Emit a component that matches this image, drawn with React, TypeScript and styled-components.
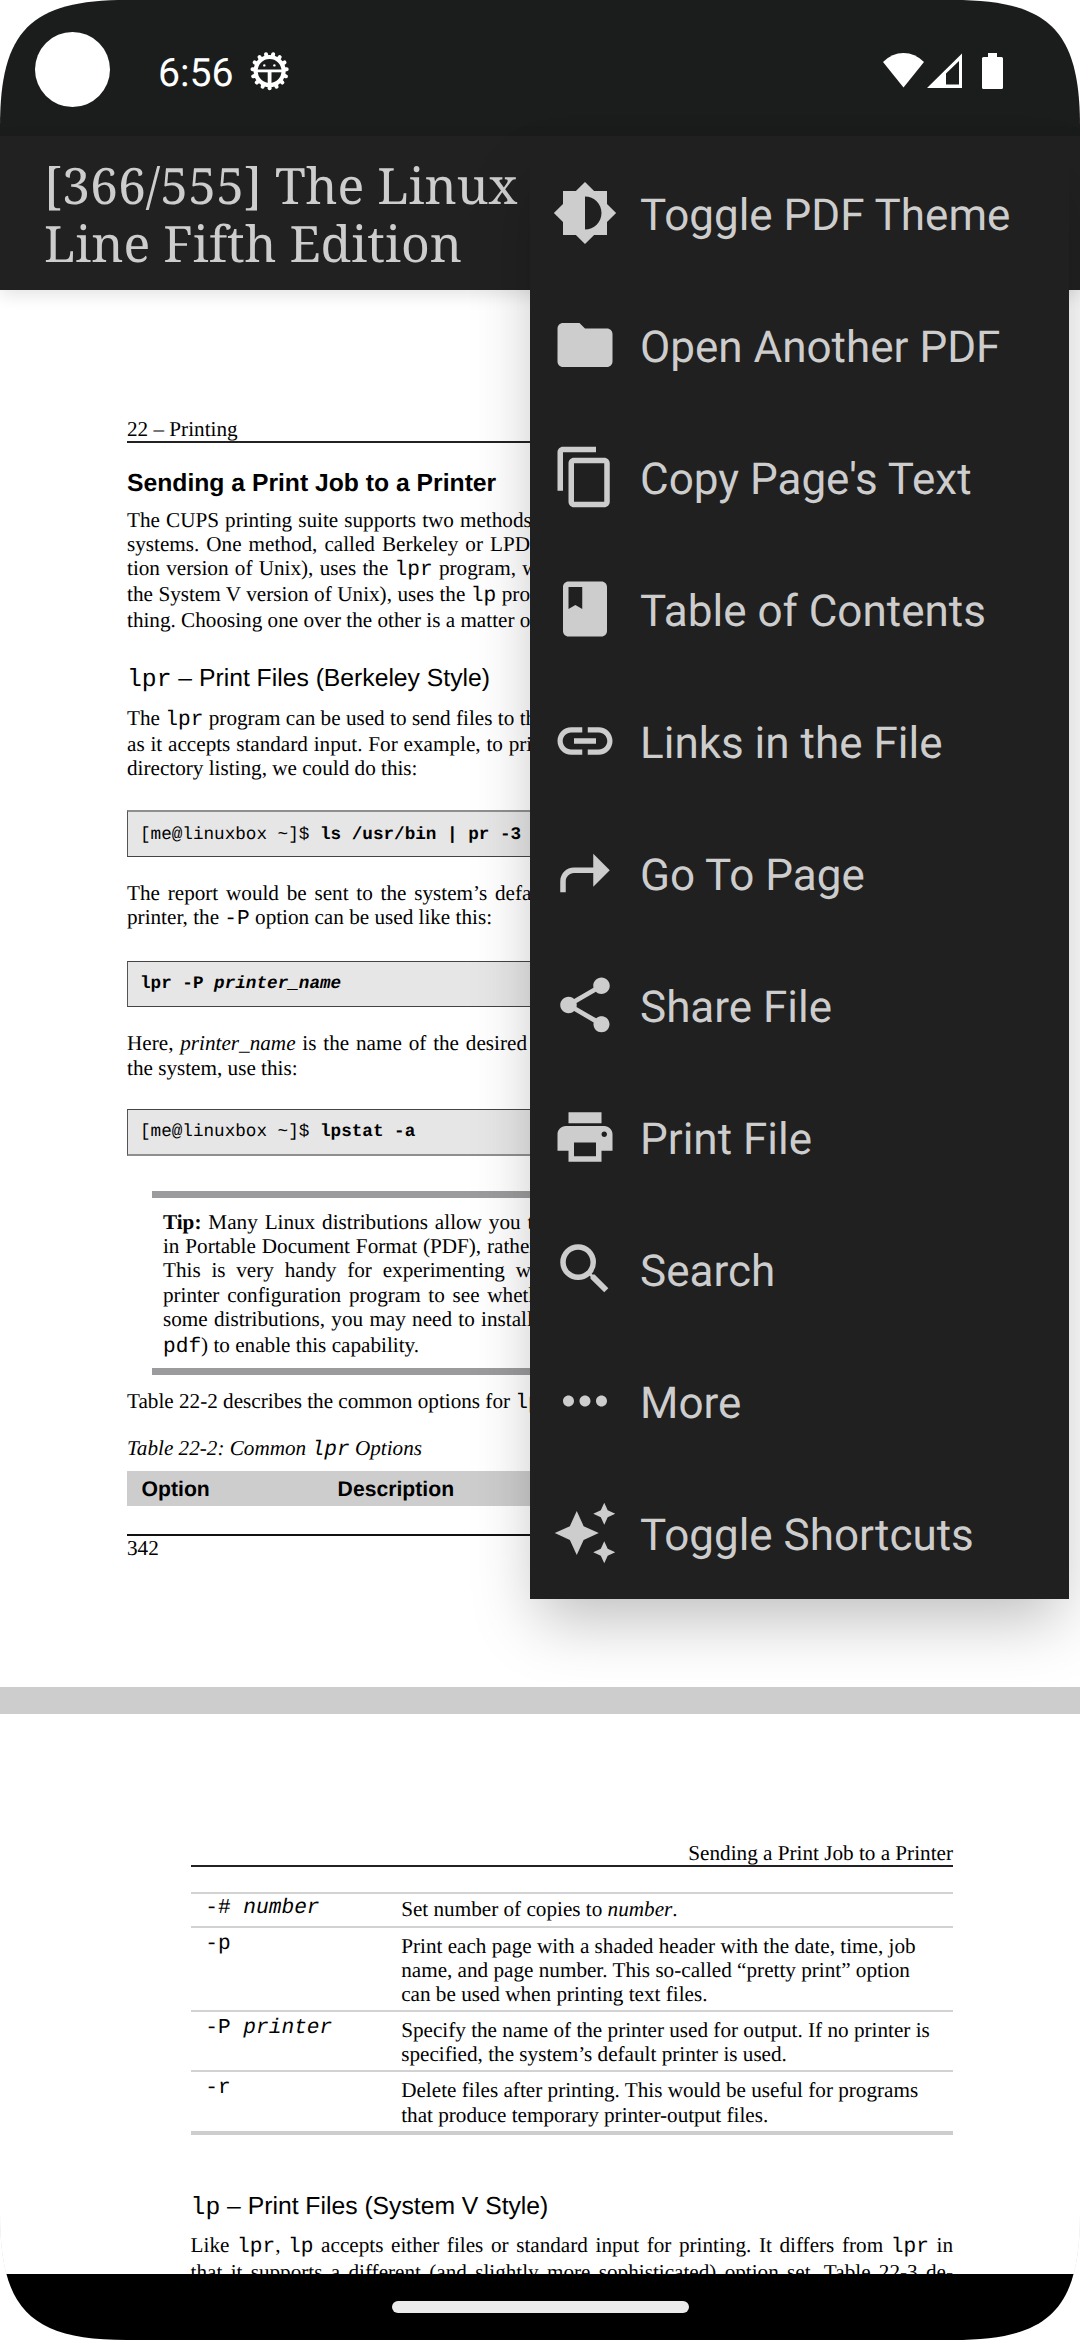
import React from "react";
import styled, { createGlobalStyle, css } from "styled-components";
import type { IconType } from "react-icons";
import {
  MdAutoAwesome,
  MdBrightness6,
  MdClass,
  MdContentCopy,
  MdFolder,
  MdLink,
  MdMoreHoriz,
  MdPrint,
  MdSearch,
  MdShare,
  MdShortcut,
} from "react-icons/md";

const serif = `"Liberation Serif", "Times New Roman", serif`;
const sans = `"Liberation Sans", Arial, sans-serif`;
const mono = `"Liberation Mono", "Courier New", monospace`;

const GlobalStyle = createGlobalStyle`
  html, body { margin: 0; padding: 0; background: #fff; }
  * { box-sizing: border-box; }
`;

/* ---------- device frame ---------- */

const Device = styled.div`
  position: relative;
  display: flex;
  flex-direction: column;
  width: 1080px;
  height: 2340px;
  overflow: hidden;
  background: #fff;
  text-rendering: geometricPrecision;
  clip-path: path(
    "M0 127 C0 30.5 30.5 0 127 0 H953 C1049.5 0 1080 30.5 1080 127 V2213 C1080 2309.5 1049.5 2340 953 2340 H127 C30.5 2340 0 2309.5 0 2213 Z"
  );
`;

const StatusBar = styled.header`
  flex: none;
  display: flex;
  align-items: flex-start;
  height: 136px;
  padding-left: 35px;
  background: #1b1d1c;
  color: #fff;
`;

const Camera = styled.div`
  width: 75px;
  height: 75px;
  margin-top: 32px;
  border-radius: 50%;
  background: #fff;
`;

const Clock = styled.div`
  width: 92px;
  margin: 51px 0 0 48px;
  font: 400 39.2px/44px Roboto, sans-serif;
`;

const Gear = styled.svg`
  width: 40px;
  height: 40px;
  margin-top: 51px;
  fill: none;
  stroke: #fff;
`;

const SystemIcons = styled.svg`
  width: 122px;
  height: 38px;
  margin: 52px 0 0 592px;
  fill: #fff;
`;

const Toolbar = styled.div`
  position: relative;
  z-index: 1;
  flex: none;
  height: 154px;
  padding: 20px 0 0 44px;
  background: #212121;
  box-shadow: 0 5px 16px rgba(0, 0, 0, 0.11);
`;

const Title = styled.h1`
  width: 486px;
  margin: 0;
  color: #cdcdcd;
  font: 400 50px/58px "Noto Serif", "DejaVu Serif Condensed", "DejaVu Serif", serif;
  font-stretch: condensed;
  white-space: nowrap;
`;

const Viewer = styled.main`
  flex: 1;
  min-height: 0;
  overflow: hidden;
  background: #cdcdcd;
`;

const NavBar = styled.footer`
  flex: none;
  display: flex;
  justify-content: center;
  height: 66px;
  padding-top: 27px;
  background: #000;
`;

const Pill = styled.div`
  width: 297px;
  height: 11.5px;
  border-radius: 6px;
  background: #ebebeb;
`;

/* ---------- overflow menu ---------- */

const Menu = styled.nav`
  position: absolute;
  z-index: 2;
  top: 147px;
  right: 11px;
  width: 539px;
  background: #202020;
  box-shadow: 0 28px 60px -8px rgba(0, 0, 0, 0.26);
`;

const MenuItem = styled.div`
  display: flex;
  align-items: center;
  gap: 22px;
  height: 132px;
  padding-left: 22px;
  color: #cdcdcd;
  svg {
    width: 66px;
    height: 66px;
  }
`;

const MenuLabel = styled.span`
  padding-top: 3px;
  font: 400 44px/52px Roboto, sans-serif;
  white-space: nowrap;
`;

/* ---------- PDF pages ---------- */

const Page = styled.section<{ $left: number; $height: number }>`
  height: ${(p) => p.$height}px;
  margin-bottom: 27px;
  padding: 127px 0 0 ${(p) => p.$left}px;
  overflow: hidden;
  background: #fff;
  color: #000;
  font: 21.18px/24px ${serif};
`;

const Column = styled.div`
  width: 762.4px;
`;

const RunningHead = styled.div<{ $align?: "right" }>`
  border-bottom: 2px solid #222;
  text-align: ${(p) => p.$align ?? "left"};
`;

const Line = styled.div<{ $gap?: number; $full?: boolean }>`
  height: 24px;
  margin-top: ${(p) => p.$gap ?? 0}px;
  white-space: nowrap;
  ${(p) =>
    p.$full &&
    css`
      white-space: normal;
      text-align: justify;
      text-align-last: justify;
    `}
`;

const Code = styled.code`
  font-family: ${mono};
  font-size: 1em;
  line-height: 0;
`;

const Heading = styled.h2<{ $gap: number; $bold?: boolean }>`
  height: 27px;
  margin: ${(p) => p.$gap}px 0 0;
  font: ${(p) => (p.$bold ? 700 : 400)} 24.71px/27px ${sans};
  white-space: nowrap;
`;

const Listing = styled.pre<{ $gap: number; $height: number; $pad: number; $top: string; $bottom: string }>`
  height: ${(p) => p.$height}px;
  margin: ${(p) => p.$gap}px 0 0;
  padding: ${(p) => p.$pad}px 0 0 12px;
  border: 1px solid #555;
  border-top: ${(p) => p.$top};
  border-bottom: ${(p) => p.$bottom};
  background: #e6e6e6;
  font: 17.65px/20px ${mono};
`;

const Tip = styled.aside`
  width: 711.6px;
  height: 184px;
  margin: 35px 0 0 25.4px;
  padding: 12px 10.6px 0;
  border: solid #9b9a9c;
  border-width: 7px 0;
`;

const TableHead = styled.div`
  display: grid;
  grid-template-columns: 196px 1fr;
  height: 35px;
  margin-top: 11px;
  padding: 7px 0 0 14.6px;
  background: #cdcdcd;
  font: 700 21.18px/24px ${sans};
`;

const Footer = styled.div`
  margin-top: 28px;
  border-top: 2px solid #111;
`;

const OptionTable = styled.div`
  margin-top: 25px;
  border-bottom: 4px solid #cdcdcd;
`;

const OptionRow = styled.div<{ $height: number; $pad: number }>`
  display: grid;
  grid-template-columns: 196px 1fr;
  height: ${(p) => p.$height}px;
  padding: ${(p) => p.$pad}px 0 0 14.6px;
  border-top: 2px solid #d2d2d2;
`;

const OptionName = styled.div<{ $lift: number }>`
  margin-top: -${(p) => p.$lift}px;
  font-family: ${mono};
`;

const THIN = "1px solid #444";
const SOFT = "2px solid #8f8f8f";

const menuItems: { icon: IconType; label: string }[] = [
  { icon: MdBrightness6, label: "Toggle PDF Theme" },
  { icon: MdFolder, label: "Open Another PDF" },
  { icon: MdContentCopy, label: "Copy Page's Text" },
  { icon: MdClass, label: "Table of Contents" },
  { icon: MdLink, label: "Links in the File" },
  { icon: MdShortcut, label: "Go To Page" },
  { icon: MdShare, label: "Share File" },
  { icon: MdPrint, label: "Print File" },
  { icon: MdSearch, label: "Search" },
  { icon: MdMoreHoriz, label: "More" },
  { icon: MdAutoAwesome, label: "Toggle Shortcuts" },
];

function GearIcon() {
  const teeth = Array.from({ length: 15 }, (_, i) => 90 + i * 24);
  return (
    <Gear viewBox="0 0 40 40">
      <circle cx="19.6" cy="20" r="14" strokeWidth="4.2" />
      {teeth.map((angle) => (
        <path key={angle} d="M34 20h2.8" strokeWidth="4" strokeLinecap="round" transform={`rotate(${angle} 19.6 20)`} />
      ))}
      <path d="M7 19.9h25.2" strokeWidth="2.8" />
      <path d="M19.6 20v13" strokeWidth="3.8" />
      <circle cx="14.3" cy="14.4" r="1.2" fill="#fff" stroke="none" />
      <circle cx="24.4" cy="14.4" r="1.2" fill="#fff" stroke="none" />
    </Gear>
  );
}

function FirstPage() {
  return (
    <Page $left={127} $height={1397}>
      <Column>
        <RunningHead>22 – Printing</RunningHead>
        <Heading $gap={27} $bold>Sending a Print Job to a Printer</Heading>
        <Line $gap={11} $full>The CUPS printing suite supports two methods of printing historically used on Unix-like</Line>
        <Line $full>systems. One method, called Berkeley or LPD (used in the Berkeley Software Distribu-</Line>
        <Line $full>tion version of Unix), uses the <Code>lpr</Code> program, while the other method, called SysV (from</Line>
        <Line $gap={2} $full>the System V version of Unix), uses the <Code>lp</Code> program. Both programs do roughly the same</Line>
        <Line $gap={2}>thing. Choosing one over the other is a matter of personal taste.</Line>

        <Heading $gap={33}><Code>lpr</Code> – Print Files (Berkeley Style)</Heading>
        <Line $gap={14} $full>The <Code>lpr</Code> program can be used to send files to the printer. It may also be used in pipelines,</Line>
        <Line $gap={2} $full>as it accepts standard input. For example, to print the results of the previous multicolumn</Line>
        <Line>directory listing, we could do this:</Line>

        <Listing $gap={30} $height={47} $pad={13} $top={SOFT} $bottom={THIN}>[me@linuxbox ~]$ <b>ls /usr/bin | pr -3 | lpr</b></Listing>
        <Line $gap={24} $full>The report would be sent to the system’s default printer. To send the file to a different</Line>
        <Line>printer, the <Code>-P</Code> option can be used like this:</Line>

        <Listing $gap={32} $height={46} $pad={12} $top={THIN} $bottom={THIN}><b>lpr -P <i>printer_name</i></b></Listing>
        <Line $gap={24} $full>Here, <i>printer_name</i> is the name of the desired printer. To see a list of printers known to</Line>
        <Line $gap={1}>the system, use this:</Line>

        <Listing $gap={29} $height={47} $pad={12} $top={THIN} $bottom={SOFT}>[me@linuxbox ~]$ <b>lpstat -a</b></Listing>

        <Tip>
          <Line $full><b>Tip:</b> Many Linux distributions allow you to define a “printer” that outputs files</Line>
          <Line $full>in Portable Document Format (PDF), rather than printing on the physical printer.</Line>
          <Line $full>This is very handy for experimenting with printing commands. Check your</Line>
          <Line $gap={1} $full>printer configuration program to see whether it supports this configuration. On</Line>
          <Line $full>some distributions, you may need to install additional packages (such as <Code>cups-</Code></Line>
          <Line $gap={2}><Code>pdf</Code>) to enable this capability.</Line>
        </Tip>

        <Line $gap={14}>Table 22-2 describes the common options for <Code>lpr</Code>.</Line>
        <Line $gap={23}><i>Table 22-2: Common <Code>lpr</Code> Options</i></Line>
        <TableHead>
          <span>Option</span>
          <span>Description</span>
        </TableHead>
        <Footer>342</Footer>
      </Column>
    </Page>
  );
}

function SecondPage() {
  return (
    <Page $left={190.6} $height={1398}>
      <Column>
        <RunningHead $align="right">Sending a Print Job to a Printer</RunningHead>
        <OptionTable>
          <OptionRow $height={34} $pad={3}>
            <OptionName $lift={1}>-# <i>number</i></OptionName>
            <div>
              <Line>Set number of copies to <i>number</i>.</Line>
            </div>
          </OptionRow>
          <OptionRow $height={84} $pad={6}>
            <OptionName $lift={2}>-p</OptionName>
            <div>
              <Line>Print each page with a shaded header with the date, time, job</Line>
              <Line>name, and page number. This so-called “pretty print” option</Line>
              <Line>can be used when printing text files.</Line>
            </div>
          </OptionRow>
          <OptionRow $height={60} $pad={6}>
            <OptionName $lift={2}>-P <i>printer</i></OptionName>
            <div>
              <Line>Specify the name of the printer used for output. If no printer is</Line>
              <Line>specified, the system’s default printer is used.</Line>
            </div>
          </OptionRow>
          <OptionRow $height={61} $pad={6}>
            <OptionName $lift={2}>-r</OptionName>
            <div>
              <Line>Delete files after printing. This would be useful for programs</Line>
              <Line $gap={1}>that produce temporary printer-output files.</Line>
            </div>
          </OptionRow>
        </OptionTable>

        <Heading $gap={58}><Code>lp</Code> – Print Files (System V Style)</Heading>
        <Line $gap={13} $full>Like <Code>lpr</Code>, <Code>lp</Code> accepts either files or standard input for printing. It differs from <Code>lpr</Code> in</Line>
        <Line $gap={3} $full>that it supports a different (and slightly more sophisticated) option set. Table 22-3 de-</Line>
      </Column>
    </Page>
  );
}

export default function App() {
  return (
    <>
      <GlobalStyle />
      <Device>
        <StatusBar>
          <Camera />
          <Clock>6:56</Clock>
          <GearIcon />
          <SystemIcons viewBox="882 52 122 38">
            <path d="M903.5 87.5L883 62Q892 53 903.5 53T924 62Z" />
            <path fillRule="evenodd" d="M927 88L962 53.500V88ZM946 73.500V84.500H959V61Z" />
            <path d="M988 53h9v4h4.500a1.500 1.500 0 0 1 1.500 1.500v29a1.500 1.500 0 0 1-1.500 1.500h-18a1.500 1.500 0 0 1-1.500-1.500v-29a1.500 1.500 0 0 1 1.500-1.500h4.500z" />
          </SystemIcons>
        </StatusBar>
        <Toolbar>
          <Title>
            [366/555] The Linux
            <br />
            Line Fifth Edition
          </Title>
        </Toolbar>
        <Viewer>
          <FirstPage />
          <SecondPage />
        </Viewer>
        <NavBar>
          <Pill />
        </NavBar>
        <Menu>
          {menuItems.map(({ icon: Icon, label }) => (
            <MenuItem key={label}>
              <Icon />
              <MenuLabel>{label}</MenuLabel>
            </MenuItem>
          ))}
        </Menu>
      </Device>
    </>
  );
}
